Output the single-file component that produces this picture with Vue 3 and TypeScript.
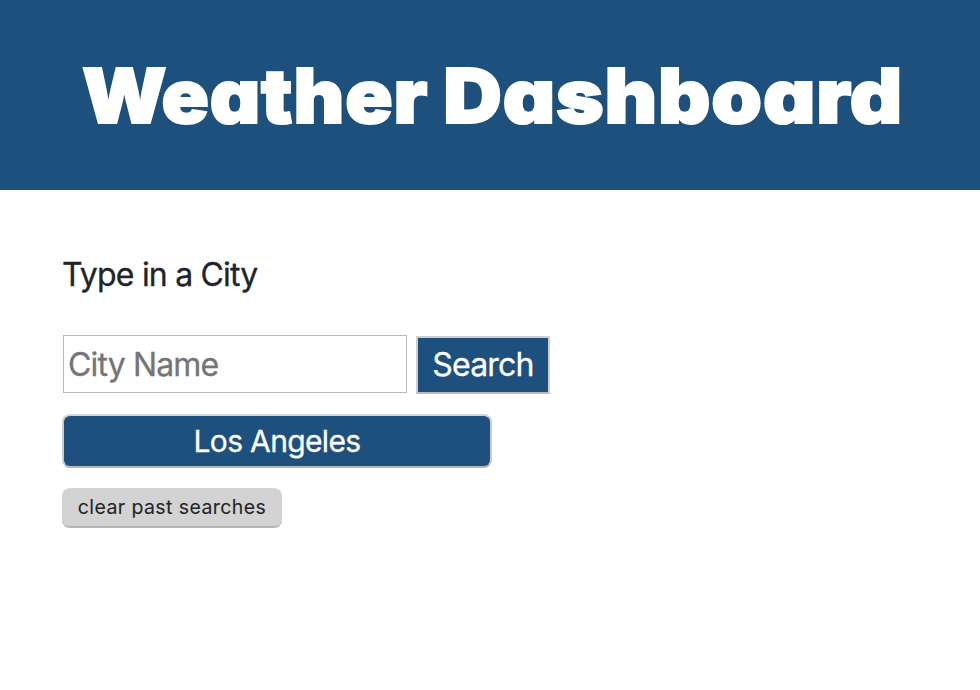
<script setup lang="ts">
import { ref } from 'vue'

const city = ref('')
const history = ref<string[]>(['Los Angeles'])

function search(): void {
  const name = city.value.trim()
  if (name) history.value.unshift(name)
  city.value = ''
}
</script>

<template>
  <div class="page">
    <header class="banner">
      <h1 class="title"><span class="word"><span class="initial">W</span>eather</span> <span class="word second">Dashboard</span></h1>
    </header>
    <main class="content">
      <label class="prompt" for="city">Type in a City</label>
      <form class="search-row" @submit.prevent="search">
        <input id="city" v-model="city" class="city-input" type="text" placeholder="City Name" />
        <button class="search-btn" type="submit">Search</button>
      </form>
      <button v-for="item in history" :key="item" class="history-btn" type="button">{{ item }}</button>
      <button class="clear-btn" type="button" @click="history = []">clear past searches</button>
    </main>
  </div>
</template>

<style>
body {
  background: #fff;
}
</style>

<style scoped>
.page {
  font-family: Inter, sans-serif;
  color: #212529;
  min-height: 690px;
}
.banner {
  box-sizing: border-box;
  height: 190px;
  padding: 1px 0 0 4px;
  background: #1d507d;
  display: flex;
  align-items: center;
  justify-content: center;
}
.title {
  display: flex;
  justify-content: space-between;
  width: 821px;
  margin: 0;
  color: #fff;
  font-family: Inter, sans-serif;
  font-weight: 900;
  font-size: 75px;
  line-height: 96px;
  white-space: nowrap;
  font-feature-settings: "cv11" 1;
  -webkit-text-stroke: 2px #fff;
}
.word {
  letter-spacing: 0.8px;
  transform: scaleX(1.043);
  transform-origin: left center;
}
.initial {
  letter-spacing: -5px;
}
.second {
  letter-spacing: 0.8px;
  transform: scaleX(1.082);
  transform-origin: right center;
}
.content {
  display: flex;
  flex-direction: column;
  align-items: flex-start;
  padding: 61px 62px 0;
}
.prompt {
  font-size: 32px;
  line-height: 48px;
  letter-spacing: -0.8px;
  -webkit-text-stroke: 0.3px;
}
.search-row {
  display: flex;
  align-items: flex-start;
  gap: 9px;
  margin: 36px 0 20px 1px;
}
button,
input {
  box-sizing: border-box;
  font-family: inherit;
  font-weight: 400;
  -webkit-text-stroke: 0.3px;
  margin: 0;
}
.city-input {
  width: 344px;
  height: 58px;
  padding: 2px 4px;
  border: 1px solid #b9b9b9;
  font-size: 32px;
  letter-spacing: -0.85px;
  outline: none;
}
.city-input::placeholder {
  color: #757575;
}
.search-btn {
  width: 134px;
  height: 58px;
  margin-top: 1px;
  padding: 0 0 2px;
  border: 2px solid;
  border-color: #cfcfcf #cfcfcf #bababa;
  background: #1d507d;
  color: #fff;
  font-size: 32px;
  letter-spacing: -0.8px;
}
.history-btn {
  width: 430px;
  height: 54px;
  padding: 0;
  margin-bottom: 20px;
  border: 2px solid;
  border-color: #d6d6d6 #cdcdcd #b5b5b5;
  border-radius: 8px;
  background: #1d507d;
  color: #fff;
  font-size: 30px;
  letter-spacing: -0.65px;
}
.clear-btn {
  width: 220px;
  height: 40px;
  padding: 0 0 1px;
  border: 0;
  border-bottom: 2px solid #b5b5b5;
  border-radius: 8px;
  background: #d3d3d3;
  color: #212529;
  font-size: 19.5px;
  letter-spacing: 0.42px;
  -webkit-text-stroke: 0.1px;
}
</style>
